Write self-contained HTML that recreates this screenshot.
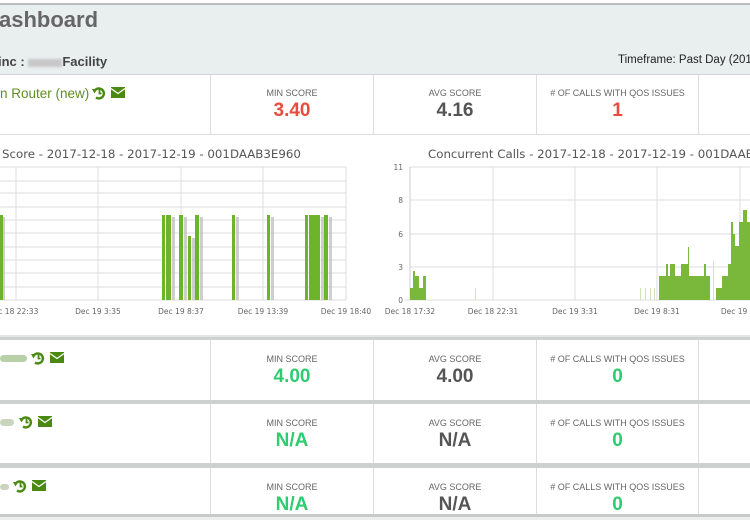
<!DOCTYPE html>
<html><head><meta charset="utf-8"><style>
*{margin:0;padding:0;box-sizing:border-box}
body{width:750px;height:520px;overflow:hidden;background:#fff;font-family:"Liberation Sans",sans-serif;position:relative}
.a{position:absolute}
.lbl{position:absolute;font-size:9px;color:#666;text-align:center;width:100%}
.val{position:absolute;font-size:19px;font-weight:bold;text-align:center;width:100%}
.cell{position:absolute;border-left:1px solid #ddd}
.grn{color:#2ecc71}.red{color:#e74c3c}.dk{color:#555}
.band{position:absolute;left:0;width:750px;background:#cfd1d1}
.name{position:absolute;font-size:13.5px;color:#5f8f1e;white-space:nowrap}
</style></head><body>
<div class="a" style="left:0;top:3px;width:750px;height:2px;background:#bcbebe"></div>
<div class="a" style="left:0;top:5px;width:750px;height:69px;background:#e9eeee"></div>
<div class="a" style="left:0;top:74px;width:750px;height:1px;background:#d0d4d4"></div>
<div class="a" style="left:-1px;top:7px;font-size:22px;font-weight:bold;color:#666">ashboard</div>
<div class="a" style="left:-2px;top:54px;font-size:13px;font-weight:bold;color:#444;white-space:nowrap">inc : <span style="display:inline-block;width:34px;height:8px;background:#c8c8c8;vertical-align:middle;filter:blur(1px)"></span>Facility</div>
<div class="a" style="left:618px;top:54px;font-size:11.5px;color:#222;white-space:nowrap">Timeframe: Past Day (2017</div>

<svg width="0" height="0" style="position:absolute"><defs>
<g id="ic"><path d="M2.5 5 A5 5 0 1 1 4 11.5" fill="none" stroke="#4a8a12" stroke-width="2.4"/><path d="M0 3 L5 3 L2.5 7.5Z" fill="#4a8a12"/><path d="M7.5 3.5 V7.5 H9.5" fill="none" stroke="#4a8a12" stroke-width="1.8"/>
<rect x="19" y="1" width="14" height="11" fill="#4a8a12"/><path d="M19 2.5 L26 7.5 L33 2.5" fill="none" stroke="#fff" stroke-width="1.3"/></g>
</defs></svg>

<div class="name" style="left:0;top:86px">n Router (new)</div>
<svg class="a" style="left:92px;top:86px" width="34" height="14"><use href="#ic"/></svg>
<div class="cell" style="left:210px;top:75px;width:163px;height:60px"><div class="lbl" style="top:13px">MIN SCORE</div><div class="val red" style="top:25px">3.40</div></div>
<div class="cell" style="left:373px;top:75px;width:163px;height:60px"><div class="lbl" style="top:13px">AVG SCORE</div><div class="val dk" style="top:25px">4.16</div></div>
<div class="cell" style="left:536px;top:75px;width:162px;height:60px"><div class="lbl" style="top:13px"># OF CALLS WITH QOS ISSUES</div><div class="val red" style="top:25px">1</div></div>
<div class="cell" style="left:698px;top:75px;width:52px;height:60px"></div>
<div class="a" style="left:0;top:134px;width:750px;height:1px;background:#ddd"></div>

<svg class="a" style="left:0;top:135px" width="750" height="200" font-family="DejaVu Sans, sans-serif">
<text x="2" y="23" font-size="11.8" fill="#555">Score - 2017-12-18 - 2017-12-19 - 001DAAB3E960</text>
<g stroke="#dcdcdc" stroke-width="1">
<line x1="0" x2="346" y1="32" y2="32"/><line x1="0" x2="346" y1="46" y2="46"/><line x1="0" x2="346" y1="58" y2="58"/><line x1="0" x2="346" y1="72" y2="72"/><line x1="0" x2="346" y1="85" y2="85"/><line x1="0" x2="346" y1="98" y2="98"/><line x1="0" x2="346" y1="112" y2="112"/><line x1="0" x2="346" y1="125" y2="125"/><line x1="0" x2="346" y1="138" y2="138"/><line x1="0" x2="346" y1="152" y2="152"/><line x1="0" x2="346" y1="165" y2="165"/>
<line x1="16" x2="16" y1="32" y2="165"/><line x1="98" x2="98" y1="32" y2="165"/><line x1="181" x2="181" y1="32" y2="165"/><line x1="263" x2="263" y1="32" y2="165"/><line x1="346" x2="346" y1="32" y2="165"/>
</g>
<g fill="#bbb" opacity="0.7">
<rect x="2" y="82" width="3" height="83"/><rect x="167" y="82" width="3" height="83"/><rect x="172" y="82" width="3" height="83"/><rect x="184" y="82" width="3" height="83"/><rect x="192" y="103" width="3" height="62"/><rect x="200" y="82" width="3" height="83"/><rect x="236" y="82" width="3" height="83"/><rect x="271" y="82" width="3" height="83"/><rect x="321" y="82" width="3" height="83"/><rect x="329" y="82" width="3" height="83"/>
</g>
<g fill="#6cb42a">
<rect x="0" y="80" width="3" height="85"/><rect x="162" y="80" width="3" height="85"/><rect x="166" y="80" width="5" height="85"/><rect x="179" y="80" width="4" height="85"/><rect x="188" y="101" width="3" height="64"/><rect x="195" y="80" width="4" height="85"/><rect x="232" y="80" width="3" height="85"/><rect x="267" y="80" width="3" height="85"/><rect x="305" y="80" width="3" height="85"/><rect x="309" y="80" width="11" height="85"/><rect x="324" y="80" width="4" height="85"/>
</g>
<g font-size="7.5" fill="#666" text-anchor="middle">
<text x="16" y="179">ec 18 22:33</text><text x="98" y="179">Dec 19 3:35</text><text x="181" y="179">Dec 19 8:37</text><text x="263" y="179">Dec 19 13:39</text><text x="346" y="179">Dec 19 18:40</text>
</g>

<text x="428" y="23" font-size="11.8" fill="#555">Concurrent Calls - 2017-12-18 - 2017-12-19 - 001DAAB3E960</text>
<g stroke="#dcdcdc" stroke-width="1">
<line x1="410" x2="750" y1="32" y2="32"/><line x1="410" x2="750" y1="65" y2="65"/><line x1="410" x2="750" y1="99" y2="99"/><line x1="410" x2="750" y1="132" y2="132"/><line x1="405" x2="750" y1="165" y2="165"/>
<line x1="493" x2="493" y1="32" y2="165"/><line x1="575" x2="575" y1="32" y2="165"/><line x1="657" x2="657" y1="32" y2="165"/><line x1="740" x2="740" y1="32" y2="165"/>
</g>
<line x1="410" x2="410" y1="32" y2="165" stroke="#ccc"/>
<g font-size="7.5" fill="#666" text-anchor="end">
<text x="403" y="35">11</text><text x="403" y="68">8</text><text x="403" y="102">6</text><text x="403" y="135">3</text><text x="403" y="168">0</text>
</g>
<path fill="#79b83a" d="M410 165V153H413V136H415V141H419V153H423V141H426V165Z"/>
<path fill="#79b83a" d="M659 165V141H666V129H668V141H670V129H675V141H681V129H688V112H689V141H704V129H706V141H710V165Z"/>
<path fill="#79b83a" d="M716 165V153H722V141H728V129H731V87H733V99H735V111H739V87H743V75H747V87H750V165Z"/>
<g fill="#cfe3b8"><rect x="475" y="153" width="1" height="12"/><rect x="640" y="153" width="1" height="12"/><rect x="645" y="153" width="1" height="12"/><rect x="650" y="153" width="1" height="12"/><rect x="654" y="153" width="1" height="12"/><rect x="713" y="126" width="1" height="39"/></g>
<g font-size="7.5" fill="#666" text-anchor="middle">
<text x="410" y="179">Dec 18 17:32</text><text x="493" y="179">Dec 18 22:31</text><text x="575" y="179">Dec 19 3:31</text><text x="657" y="179">Dec 19 8:31</text><text x="740" y="179">Dec 19 13</text>
</g>
</svg>

<div class="band" style="top:335px;height:5px;background:#e4e6e6"></div>
<div class="band" style="top:337px;height:3px"></div>

<div class="a" style="left:0;top:355px;width:27px;height:7px;background:#b8d0a8;border-radius:4px"></div>
<svg class="a" style="left:31px;top:351px" width="34" height="14"><use href="#ic"/></svg>
<div class="cell" style="left:210px;top:340px;width:163px;height:60px"><div class="lbl" style="top:14px">MIN SCORE</div><div class="val grn" style="top:26px">4.00</div></div>
<div class="cell" style="left:373px;top:340px;width:163px;height:60px"><div class="lbl" style="top:14px">AVG SCORE</div><div class="val dk" style="top:26px">4.00</div></div>
<div class="cell" style="left:536px;top:340px;width:162px;height:60px"><div class="lbl" style="top:14px"># OF CALLS WITH QOS ISSUES</div><div class="val grn" style="top:26px">0</div></div>
<div class="cell" style="left:698px;top:340px;width:52px;height:60px"></div>
<div class="band" style="top:400px;height:4px"></div>

<div class="a" style="left:0;top:419px;width:14px;height:7px;background:#c9d6bd;border-radius:4px"></div>
<svg class="a" style="left:19px;top:415px" width="34" height="14"><use href="#ic"/></svg>
<div class="cell" style="left:210px;top:404px;width:163px;height:59px"><div class="lbl" style="top:14px">MIN SCORE</div><div class="val grn" style="top:26px">N/A</div></div>
<div class="cell" style="left:373px;top:404px;width:163px;height:59px"><div class="lbl" style="top:14px">AVG SCORE</div><div class="val dk" style="top:26px">N/A</div></div>
<div class="cell" style="left:536px;top:404px;width:162px;height:59px"><div class="lbl" style="top:14px"># OF CALLS WITH QOS ISSUES</div><div class="val grn" style="top:26px">0</div></div>
<div class="cell" style="left:698px;top:404px;width:52px;height:59px"></div>
<div class="band" style="top:463px;height:5px"></div>

<div class="a" style="left:0;top:484px;width:9px;height:6px;background:#c9d6bd;border-radius:3px"></div>
<svg class="a" style="left:13px;top:479px" width="34" height="14"><use href="#ic"/></svg>
<div class="cell" style="left:210px;top:468px;width:163px;height:46px"><div class="lbl" style="top:14px">MIN SCORE</div><div class="val grn" style="top:26px">N/A</div></div>
<div class="cell" style="left:373px;top:468px;width:163px;height:46px"><div class="lbl" style="top:14px">AVG SCORE</div><div class="val dk" style="top:26px">N/A</div></div>
<div class="cell" style="left:536px;top:468px;width:162px;height:46px"><div class="lbl" style="top:14px"># OF CALLS WITH QOS ISSUES</div><div class="val grn" style="top:26px">0</div></div>
<div class="cell" style="left:698px;top:468px;width:52px;height:46px"></div>
<div class="band" style="top:514px;height:3px;background:#c8caca"></div>
<div class="band" style="top:517px;height:3px;background:#eceeee"></div>
</body></html>
